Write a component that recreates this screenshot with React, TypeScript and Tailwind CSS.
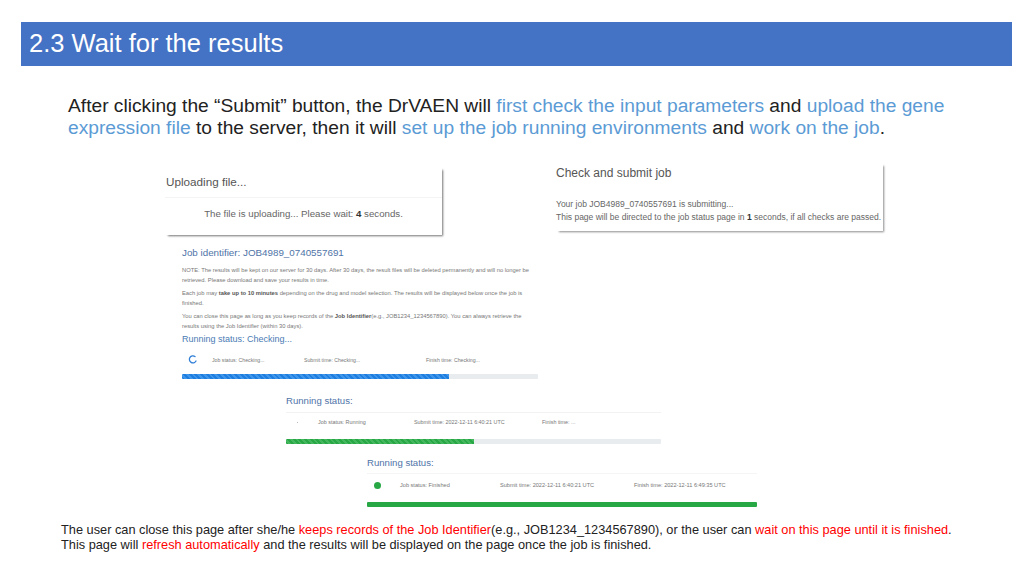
const sans = "font-['Liberation_Sans',Arial,sans-serif]";

function Hl({ children }: { children: React.ReactNode }) {
  return <span className="text-[#5b9bd5]">{children}</span>;
}

function Red({ children }: { children: React.ReactNode }) {
  return <span className="text-[#ff0000]">{children}</span>;
}

interface StatusRowProps {
  icon: React.ReactNode;
  status: string;
  submit: string;
  finish: string;
  cols: string;
}

function StatusRow({ icon, status, submit, finish, cols }: StatusRowProps) {
  return (
    <div className={`grid items-center leading-[8px] text-[#777] whitespace-nowrap ${cols}`}>
      <div className="flex justify-center">{icon}</div>
      <div>{status}</div>
      <div>{submit}</div>
      <div>{finish}</div>
    </div>
  );
}

function Bar({ pct, fill }: { pct: number; fill: string }) {
  return (
    <div className="h-[5px] rounded-[1px] bg-[#e9ecef] overflow-hidden">
      <div className={`h-full ${fill}`} style={{ width: `${pct}%` }} />
    </div>
  );
}

export default function App() {
  return (
    <div className={`${sans} w-[1024px] h-[576px] bg-white overflow-hidden pt-[22px]`}>
      {/* Title bar */}
      <div className="mx-[21px] w-[991px] h-[44px] bg-[#4472c4] pl-2 flex items-center text-white text-[25.5px] leading-none">
        2.3 Wait for the results
      </div>

      {/* Intro */}
      <p className="ml-[68px] mt-[29px] w-[900px] text-[19.2px] leading-[22px] text-[#222] whitespace-nowrap">
        After clicking the “Submit” button, the DrVAEN will <Hl>first check the input parameters</Hl> and{" "}
        <Hl>upload the gene</Hl>
        <br />
        <Hl>expression file</Hl> to the server, then it will <Hl>set up the job running environments</Hl> and{" "}
        <Hl>work on the job</Hl>.
      </p>

      {/* Two dialogs */}
      <div className="flex items-start mt-[24px] ml-[165px] h-[73px]">
        <div className="w-[277px] h-[68px] mt-[4px] bg-white shadow-[2px_2px_2px_-1px_rgba(0,0,0,0.55)]">
          <div className="h-[31px] border-b border-[#f4f4f4] pl-[1px] pb-[1px] flex items-center text-[11.7px] text-[#555]">
            Uploading file...
          </div>
          <div className="pt-[9px] text-center text-[9.7px] text-[#666]">
            The file is uploading... Please wait: <b className="text-[#333]">4</b> seconds.
          </div>
        </div>
        <div className="ml-[114px] w-[327px] h-[68px] bg-white shadow-[2px_2px_2px_-1px_rgba(0,0,0,0.45)]">
          <div className="pt-[3px] text-[12px] leading-[14px] text-[#555]">Check and submit job</div>
          <div className="mt-[18px] text-[8.5px] leading-[13px] text-[#666] whitespace-nowrap">
            Your job JOB4989_0740557691 is submitting...
            <br />
            This page will be directed to the job status page in <b className="text-[#333]">1</b> seconds, if all
            checks are passed.
          </div>
        </div>
      </div>

      {/* Job status, checking */}
      <div className="ml-[182px] mt-[10px] w-[356px]">
        <div className="text-[9.8px] leading-[14px] text-[#4f74a8]">Job identifier: JOB4989_0740557691</div>
        <div className="mt-[6px] text-[5.8px] leading-[9.5px] text-[#777] w-[350px]">
          <p>
            NOTE: The results will be kept on our server for 30 days. After 30 days, the result files will be deleted
            permanently and will no longer be retrieved. Please download and save your results in time.
          </p>
          <p className="mt-[4px]">
            Each job may <b className="text-[#555]">take up to 10 minutes</b> depending on the drug and model
            selection. The results will be displayed below once the job is finished.
          </p>
          <p className="mt-[4px]">
            You can close this page as long as you keep records of the <b className="text-[#555]">Job Identifier</b>
            (e.g., JOB1234_1234567890). You can always retrieve the results using the Job Identifier (within 30 days).
          </p>
        </div>
        <div className="mt-[2px] text-[9px] leading-[13px] text-[#4a7bb5]">Running status: Checking...</div>
        <div className="mt-[9px]">
          <StatusRow
            cols="grid-cols-[30px_92px_122px_1fr] text-[5.2px]"
            icon={
              <svg width="9" height="9" viewBox="0 0 9 9" fill="none" className="-ml-[10px]">
                <path d="M7 1.6A3.5 3.5 0 1 0 8 6" stroke="#2f7fd6" strokeWidth="1.3" strokeLinecap="round" />
              </svg>
            }
            status="Job status: Checking..."
            submit="Submit time: Checking..."
            finish="Finish time: Checking..."
          />
        </div>
        <div className="mt-[10px]">
          <Bar
            pct={75}
            fill="bg-[repeating-linear-gradient(45deg,#1f7fe0_0,#1f7fe0_2px,#3f95ea_2px,#3f95ea_4px)]"
          />
        </div>
      </div>

      {/* Job status, running */}
      <div className="ml-[286px] mt-[15px] w-[375px]">
        <div className="text-[9.6px] leading-[13px] text-[#4f74a8]">Running status:</div>
        <div className="mt-[5px] border-t border-[#f2f2f2] pt-[5px]">
          <StatusRow
            cols="grid-cols-[32px_96px_128px_1fr] text-[5.4px]"
            icon={<span className="block w-[1px] h-[1px] bg-[#bbb] -ml-[10px]" />}
            status="Job status: Running"
            submit="Submit time: 2022-12-11 6:40:21 UTC"
            finish="Finish time: ..."
          />
        </div>
        <div className="mt-[13px]">
          <Bar
            pct={50}
            fill="bg-[repeating-linear-gradient(45deg,#28a745_0,#28a745_2px,#44b65e_2px,#44b65e_4px)]"
          />
        </div>
      </div>

      {/* Job status, finished */}
      <div className="ml-[367px] mt-[12px] w-[390px]">
        <div className="text-[9.6px] leading-[13px] text-[#4f74a8]">Running status:</div>
        <div className="mt-[4px] border-t border-[#f5f5f5] pt-[7px]">
          <StatusRow
            cols="grid-cols-[33px_100px_134px_1fr] text-[5.6px]"
            icon={<span className="block w-[7px] h-[7px] rounded-full bg-[#28a745] -ml-[12px]" />}
            status="Job status: Finished"
            submit="Submit time: 2022-12-11 6:40:21 UTC"
            finish="Finish time: 2022-12-11 6:49:35 UTC"
          />
        </div>
        <div className="mt-[13px]">
          <Bar pct={100} fill="bg-[#28a745]" />
        </div>
      </div>

      {/* Footer note */}
      <p className="ml-[61px] mt-[15px] text-[12.78px] leading-[15px] text-[#222] whitespace-nowrap">
        The user can close this page after she/he <Red>keeps records of the Job Identifier</Red>(e.g.,
        JOB1234_1234567890), or the user can <Red>wait on this page until it is finished</Red>.
        <br />
        This page will <Red>refresh automatically</Red> and the results will be displayed on the page once the job is
        finished.
      </p>
    </div>
  );
}
